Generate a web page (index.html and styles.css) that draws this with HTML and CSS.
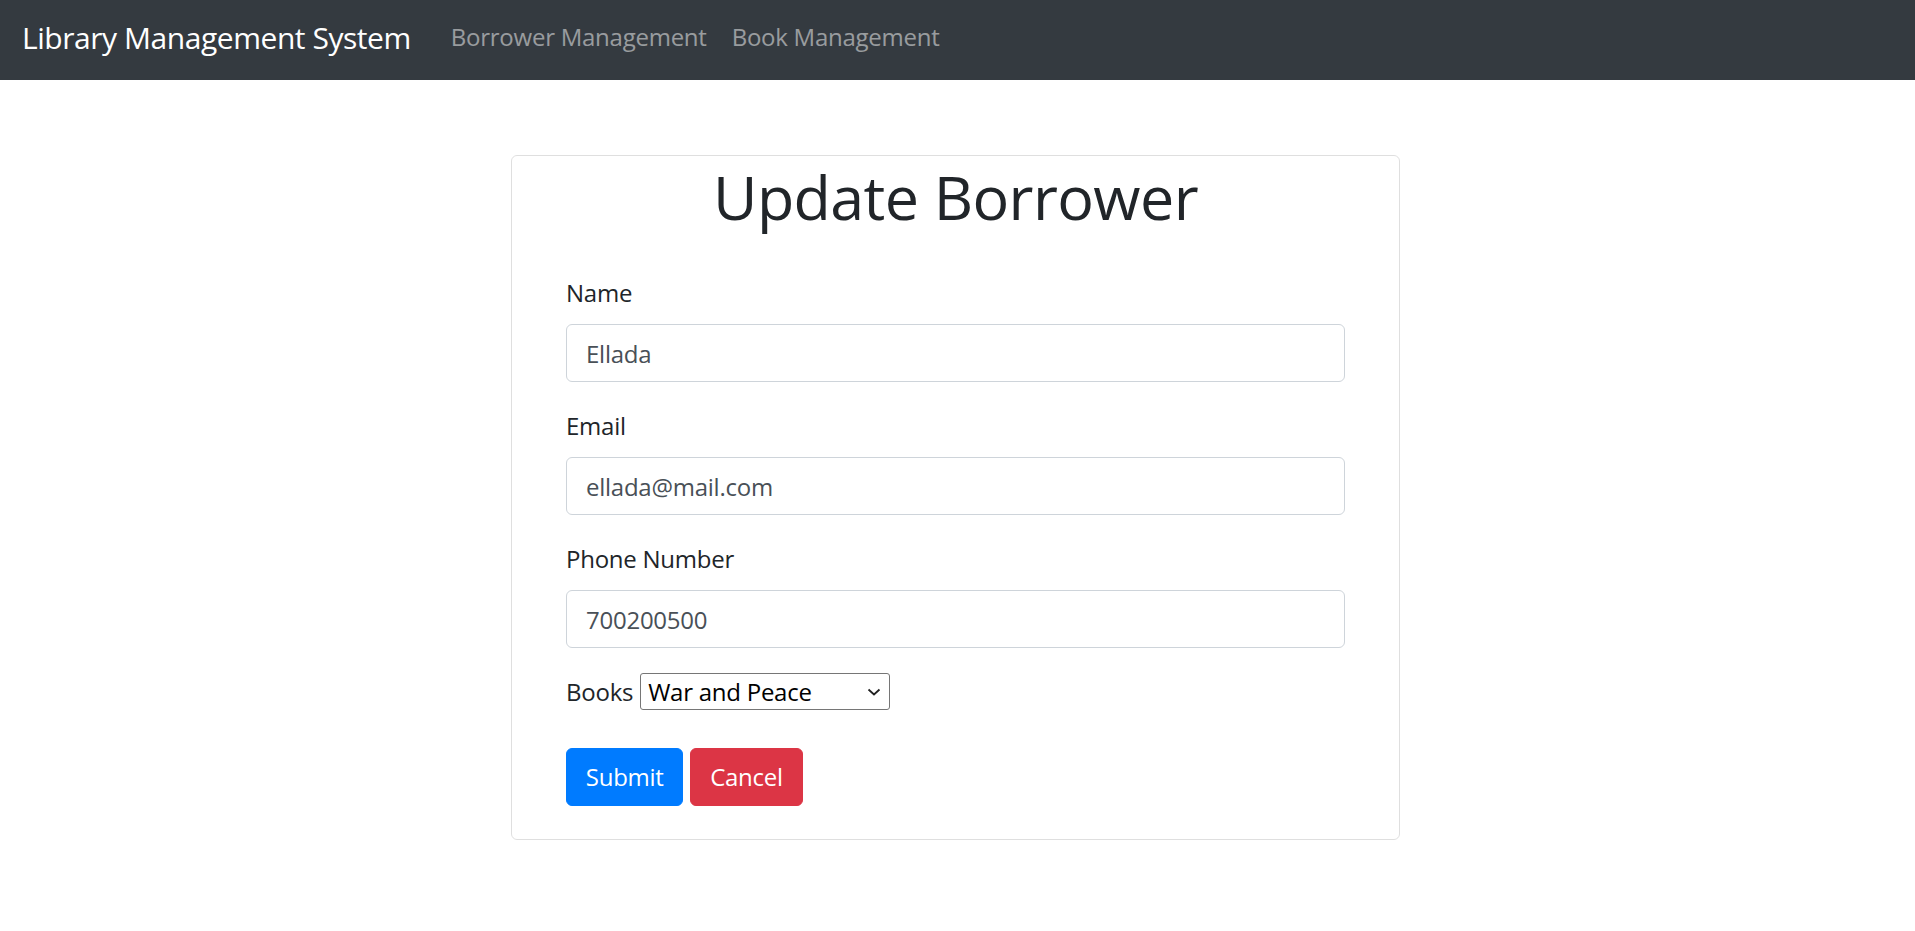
FILE: index.html
```html
<!DOCTYPE html>
<html lang="en">
<head>
<meta charset="utf-8">
<title>Update Borrower</title>
<link rel="stylesheet" href="styles.css">
</head>
<body>
<nav class="navbar">
  <a class="brand" href="#">Library Management System</a>
  <ul class="nav-links">
    <li><a class="nav-link" href="#">Borrower Management</a></li>
    <li><a class="nav-link" href="#">Book Management</a></li>
  </ul>
</nav>
<main class="page">
  <div class="card">
    <h1 class="card-title">Update Borrower</h1>
    <form class="form">
      <div class="form-group">
        <label class="form-label">Name</label>
        <input class="form-control" type="text" value="Ellada">
      </div>
      <div class="form-group">
        <label class="form-label">Email</label>
        <input class="form-control" type="text" value="ellada@mail.com">
      </div>
      <div class="form-group">
        <label class="form-label">Phone Number</label>
        <input class="form-control" type="text" value="700200500">
      </div>
      <div class="books-row">
        <label class="books-label">Books</label>
        <select class="book-select"><option>War and Peace</option></select>
      </div>
      <div class="actions">
        <button type="button" class="btn btn-primary">Submit</button>
        <button type="button" class="btn btn-danger">Cancel</button>
      </div>
    </form>
  </div>
</main>
</body>
</html>
```
FILE: styles.css
```css
html, body {
  margin: 0;
  padding: 0;
  background: #fff;
}
body {
  font-family: "Open Sans", "Noto Sans", sans-serif;
  font-size: 24px;
  letter-spacing: -0.25px;
  line-height: 1.5;
  color: #212529;
}
.navbar {
  height: 80px;
  box-sizing: border-box;
  background: #343a40;
  display: flex;
  align-items: center;
  padding: 0 22px 6px;
}
.brand {
  font-size: 30px;
  letter-spacing: -0.45px;
  color: #fff;
  text-decoration: none;
  margin-right: 40px;
  line-height: 1.5;
}
.nav-links {
  display: flex;
  gap: 25px;
  list-style: none;
  margin: 0;
  padding: 0;
}
.nav-link {
  color: rgba(255, 255, 255, 0.5);
  text-decoration: none;
  font-size: 24px;
  letter-spacing: -0.25px;
}
.page {
  padding: 75px 4px 0 0;
}
.card {
  width: 889px;
  box-sizing: border-box;
  margin: 0 auto;
  border: 1px solid rgba(0, 0, 0, 0.125);
  border-radius: 6px;
  padding: 3px 54px 33px;
}
.card-title {
  font-size: 61px;
  letter-spacing: -0.6px;
  font-weight: 400;
  line-height: 75px;
  text-align: center;
  margin: 0 0 40px;
}
.form-group {
  margin-bottom: 25px;
}
.form-label {
  display: block;
  line-height: 37.5px;
  margin-bottom: 12.5px;
}
.form-control {
  display: block;
  width: 100%;
  height: 58px;
  box-sizing: border-box;
  padding: 0 19px;
  border: 1px solid #ced4da;
  border-radius: 6px;
  font-family: inherit;
  font-size: 24px;
  letter-spacing: -0.25px;
  color: #495057;
  background: #fff;
}
.books-row {
  display: flex;
  align-items: center;
  gap: 7px;
  height: 37px;
  margin-bottom: 38px;
}
.book-select {
  width: 250px;
  height: 37px;
  box-sizing: border-box;
  appearance: none;
  -webkit-appearance: none;
  border: 1px solid #767676;
  border-radius: 3px;
  padding: 0 0 0 7px;
  font-family: inherit;
  font-size: 24px;
  letter-spacing: -0.25px;
  color: #000;
  background: #fff url("data:image/svg+xml,%3Csvg xmlns='http://www.w3.org/2000/svg' width='14' height='8' viewBox='0 0 14 8'%3E%3Cpath d='M1.5 1.5 L7 6.5 L12.5 1.5' fill='none' stroke='%23222' stroke-width='1.8'/%3E%3C/svg%3E") no-repeat right 8px center;
}
.actions {
  display: flex;
  gap: 7px;
}
.btn {
  font-family: inherit;
  font-size: 24px;
  letter-spacing: -0.25px;
  line-height: 37.5px;
  padding: 9.375px 18.75px;
  border: 1px solid transparent;
  border-radius: 6px;
  color: #fff;
  cursor: pointer;
}
.btn-primary {
  background: #007bff;
  border-color: #007bff;
}
.btn-danger {
  background: #dc3545;
  border-color: #dc3545;
}
```
